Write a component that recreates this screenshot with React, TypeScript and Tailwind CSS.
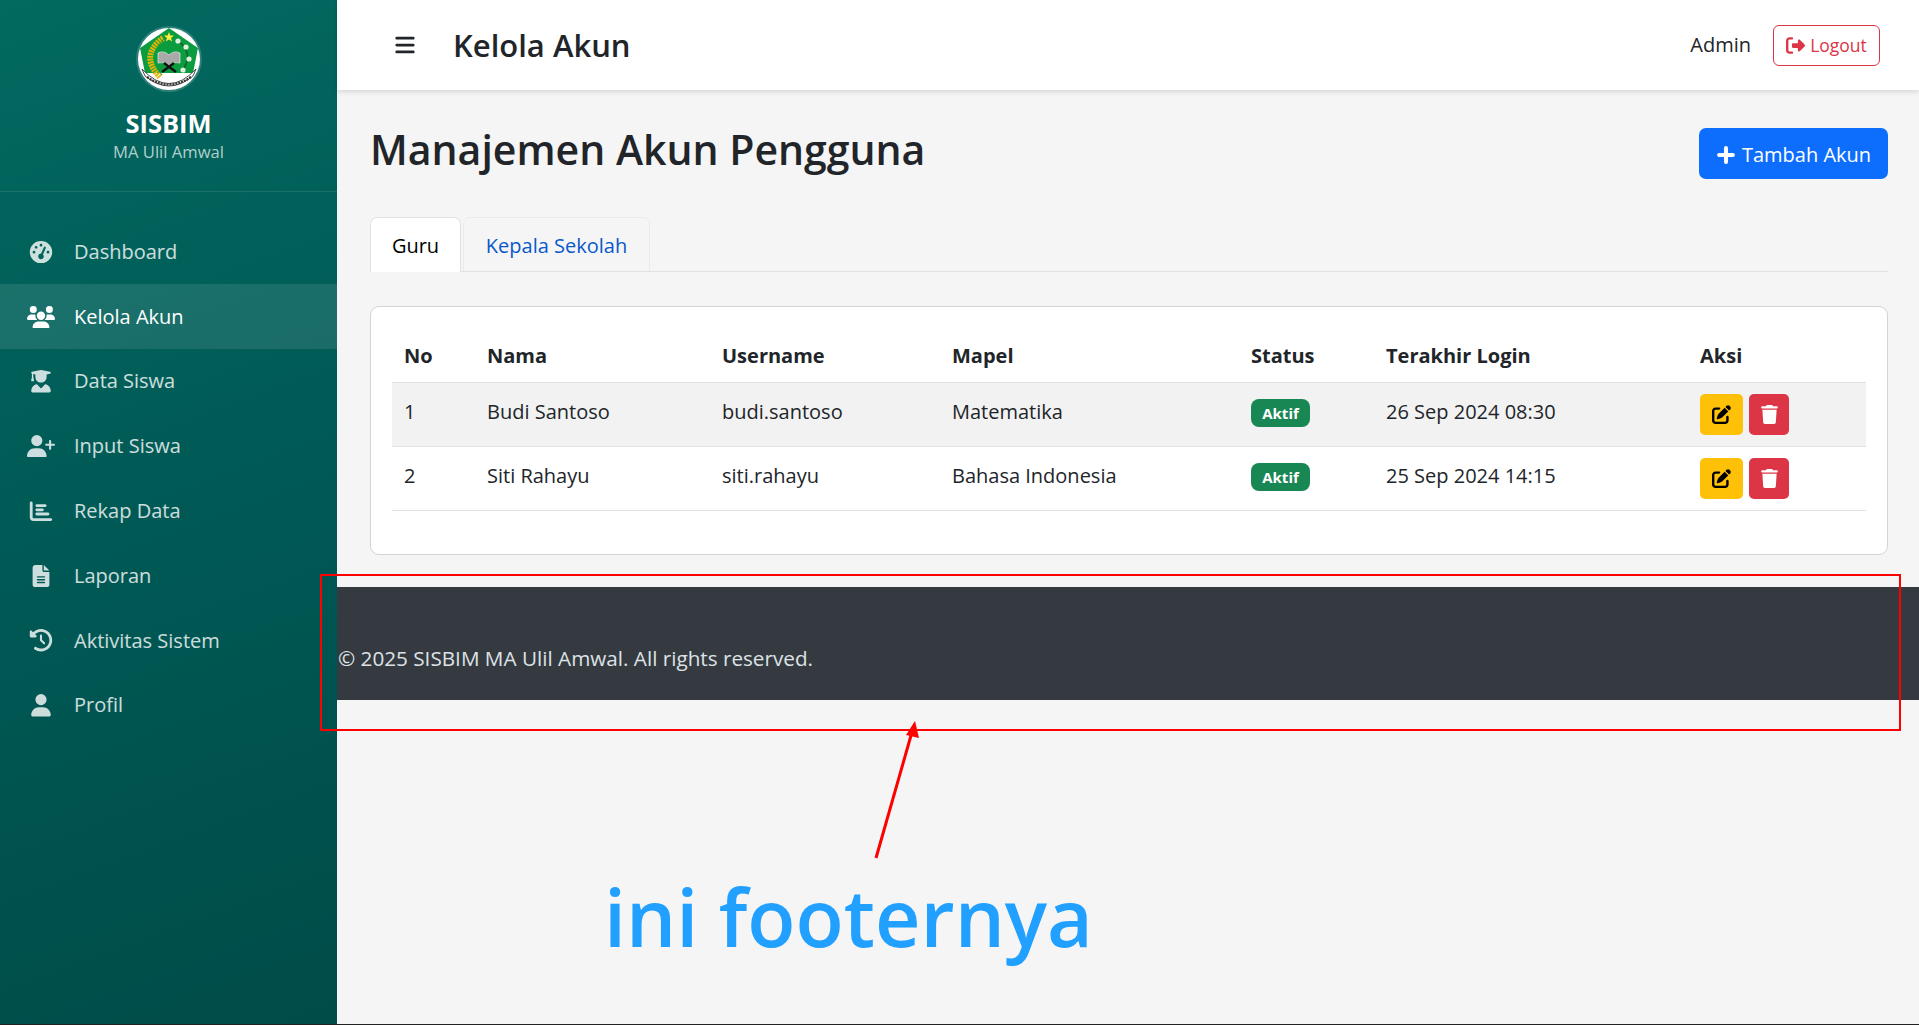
import {
  FaBars,
  FaChartBar,
  FaClockRotateLeft,
  FaFileLines,
  FaGaugeHigh,
  FaPenToSquare,
  FaPlus,
  FaRightFromBracket,
  FaTrash,
  FaUser,
  FaUserGraduate,
  FaUserPlus,
  FaUsers,
} from 'react-icons/fa6';

const menu = [
  { icon: FaGaugeHigh, label: 'Dashboard' },
  { icon: FaUsers, label: 'Kelola Akun', active: true },
  { icon: FaUserGraduate, label: 'Data Siswa' },
  { icon: FaUserPlus, label: 'Input Siswa' },
  { icon: FaChartBar, label: 'Rekap Data' },
  { icon: FaFileLines, label: 'Laporan' },
  { icon: FaClockRotateLeft, label: 'Aktivitas Sistem' },
  { icon: FaUser, label: 'Profil' },
];

const rows = [
  { no: 1, nama: 'Budi Santoso', username: 'budi.santoso', mapel: 'Matematika', login: '26 Sep 2024 08:30' },
  { no: 2, nama: 'Siti Rahayu', username: 'siti.rahayu', mapel: 'Bahasa Indonesia', login: '25 Sep 2024 14:15' },
];

function Logo() {
  return (
    <svg viewBox="0 0 66 66" className="w-[66px] h-[66px]">
      <circle cx="33" cy="33" r="33" fill="#2f8079" />
      <circle cx="33" cy="33" r="31" fill="#fff" />
      <path d="M33 2 L62 22 L57 47 L9 47 L4 22 Z" fill="#0b9c40" />
      <path d="M27 12 Q3 30 24 51" fill="none" stroke="#e3b505" strokeWidth="6" strokeDasharray="2 0.8" />
      <path d="M28 13 Q10 30 26 49" fill="none" stroke="#0b9c40" strokeWidth="1" />
      <path d="M33 6 L34.3 9.6 L38 9.6 L35 12 L36.2 15.6 L33 13.4 L29.8 15.6 L31 12 L28 9.6 L31.7 9.6 Z" fill="#ffeb3b" />
      <path d="M41 14 Q60 28 45 46" fill="none" stroke="#0d5f2c" strokeWidth="1.5" />
      <circle cx="42" cy="15" r="2.6" fill="#dfeedd" />
      <circle cx="50" cy="21" r="2.6" fill="#dfeedd" />
      <circle cx="53" cy="33" r="2.6" fill="#dfeedd" />
      <circle cx="47" cy="44" r="2.6" fill="#dfeedd" />
      <path d="M22 27 Q28 24 33 29 Q38 24 44 27 L44 37 Q38 35 33 39 Q28 35 22 37 Z" fill="#a9a9a9" stroke="#e8e8e8" strokeWidth="0.7" />
      <path d="M26 46 L38 37 M40 46 L28 37" stroke="#111" strokeWidth="2.4" />
      <path d="M6 43 Q33 72 60 43 L57 50 Q33 70 9 50 Z" fill="#fff" stroke="#222" strokeWidth="0.8" />
      <path d="M11 51 Q33 66 55 51" fill="none" stroke="#333" strokeWidth="2.2" strokeDasharray="2 1" />
    </svg>
  );
}

function Sidebar() {
  return (
    <aside className="w-[337px] shrink-0 h-full bg-[linear-gradient(160deg,#026a60_0%,#005955_50%,#004c49_100%)] text-white">
      <div className="h-[192px] border-b border-white/10 flex flex-col items-center pt-[26px]">
        <Logo />
        <div className="mt-[16px] text-[25.5px] leading-[30px] font-bold">SISBIM</div>
        <div className="mt-[2px] text-[16.6px] leading-[24px] text-white/70">MA Ulil Amwal</div>
      </div>
      <nav className="pt-[27px]">
        {menu.map((item) => (
          <div
            key={item.label}
            className={
              item.active
                ? 'h-[64.8px] flex items-center pl-[27px] pt-px text-[20px] text-white bg-white/10'
                : 'h-[64.8px] flex items-center pl-[27px] pt-px text-[20px] text-white/80'
            }
          >
            <item.icon className="w-[28px] h-[22.4px] mr-[19px]" />
            {item.label}
          </div>
        ))}
      </nav>
    </aside>
  );
}

function Header() {
  return (
    <header className="h-[90px] bg-white shadow-[0_2px_5px_rgba(0,0,0,0.12)] flex items-center pl-[57px] pr-[39px] relative">
      <FaBars className="text-[22px] text-[#212529] mr-[37px]" />
      <h1 className="text-[31px] font-semibold text-[#212529]">Kelola Akun</h1>
      <div className="ml-auto flex items-center gap-[22px]">
        <span className="text-[20px] text-[#212529]">Admin</span>
        <button className="h-[41px] w-[107px] flex items-center justify-center gap-[5px] border border-[#dc3545] rounded-[6px] text-[#dc3545] text-[17.5px]">
          <FaRightFromBracket className="text-[19px]" />
          Logout
        </button>
      </div>
    </header>
  );
}

function AccountTable() {
  return (
    <div className="mt-[34px] h-[249px] bg-white border border-[#d4d4d4] rounded-[9px] px-[21px] pt-[22px]">
      <table className="w-full table-fixed border-collapse text-[20px] text-[#212529]">
        <thead>
          <tr className="h-[53px] border-b border-[#dee2e6] text-left">
            <th className="w-[83px] pl-[12px] pt-[2px] font-bold">No</th>
            <th className="w-[235px] pl-[12px] pt-[2px] font-bold">Nama</th>
            <th className="w-[230px] pl-[12px] pt-[2px] font-bold">Username</th>
            <th className="w-[299px] pl-[12px] pt-[2px] font-bold">Mapel</th>
            <th className="w-[135px] pl-[12px] pt-[2px] font-bold">Status</th>
            <th className="w-[314px] pl-[12px] pt-[2px] font-bold">Terakhir Login</th>
            <th className="pl-[12px] pt-[2px] font-bold">Aksi</th>
          </tr>
        </thead>
        <tbody>
          {rows.map((row) => (
            <tr key={row.no} className={row.no === 1 ? 'h-[64px] border-b border-[#dee2e6] bg-[#f2f2f2]' : 'h-[64px] border-b border-[#dee2e6]'}>
              <td className="pl-[12px] pb-[4px]">{row.no}</td>
              <td className="pl-[12px] pb-[4px]">{row.nama}</td>
              <td className="pl-[12px] pb-[4px]">{row.username}</td>
              <td className="pl-[12px] pb-[4px]">{row.mapel}</td>
              <td className="pl-[12px] pb-[2px]">
                <span className="flex items-center justify-center w-[59px] h-[28px] rounded-[8px] bg-[#198754] text-white text-[15px] font-bold">
                  Aktif
                </span>
              </td>
              <td className="pl-[12px] pb-[4px]">{row.login}</td>
              <td className="pl-[12px]">
                <div className="flex gap-[6px]">
                  <button className="w-[43px] h-[41px] rounded-[5px] bg-[#ffc107] flex items-center justify-center">
                    <FaPenToSquare className="text-[19px] text-black" />
                  </button>
                  <button className="w-[40px] h-[41px] rounded-[5px] bg-[#dc3545] flex items-center justify-center">
                    <FaTrash className="text-[19px] text-white" />
                  </button>
                </div>
              </td>
            </tr>
          ))}
        </tbody>
      </table>
    </div>
  );
}

export default function App() {
  return (
    <div className="relative flex h-screen overflow-hidden border-b border-[#222222] bg-[#f5f5f5] font-['Open_Sans',sans-serif]">
      <Sidebar />
      <div className="flex-1 min-w-0 flex flex-col">
        <Header />
        <main className="pl-[33px] pr-[31px] pt-[38px]">
          <div className="flex justify-between items-start">
            <h2 className="text-[41px] leading-[46px] font-semibold text-[#212529] mt-[-2px]">Manajemen Akun Pengguna</h2>
            <button className="w-[189px] h-[51px] pt-[2px] bg-[#0d6efd] text-white text-[20px] rounded-[7px] flex items-center justify-center gap-[6px]">
              <FaPlus className="text-[20px] stroke-[40]" />
              Tambah Akun
            </button>
          </div>
          <div className="mt-[38px] h-[55px] flex items-end border-b border-[#dee2e6] gap-[2px] text-[20px]">
            <div className="w-[91px] h-[55px] pt-[2px] mb-[-1px] bg-white border border-b-0 border-[#dee2e6] rounded-t-[7px] flex items-center justify-center text-black">
              Guru
            </div>
            <div className="w-[187px] h-[54px] pt-[2px] border border-b-0 border-[#e9ecef] rounded-t-[7px] flex items-center justify-center text-[#0a58ca]">
              Kepala Sekolah
            </div>
          </div>
          <AccountTable />
        </main>
        <footer className="mt-[32px] h-[113px] bg-[#343a40] text-[#dee2e6] text-[20.7px] flex items-end pb-[26px] pl-px">
          © 2025 SISBIM MA Ulil Amwal. All rights reserved.
        </footer>
      </div>

      {/* annotation drawn over the screenshot */}
      <div className="absolute left-[320px] top-[574px] w-[1581px] h-[157px] border-2 border-[#ff0000]" />
      <svg className="absolute left-[860px] top-[710px] w-[70px] h-[155px]" viewBox="0 0 70 155">
        <path d="M16 148 L52 22" stroke="#ff0000" strokeWidth="3" fill="none" />
        <path d="M55 11 L46 25 L59 28 Z" fill="#ff0000" />
      </svg>
      <div className="absolute left-[604px] top-[867px] text-[#22a0ff] text-[79px] leading-[100px] font-semibold font-['Comic_Sans_MS','Open_Sans',sans-serif]">
        ini footernya
      </div>
    </div>
  );
}
